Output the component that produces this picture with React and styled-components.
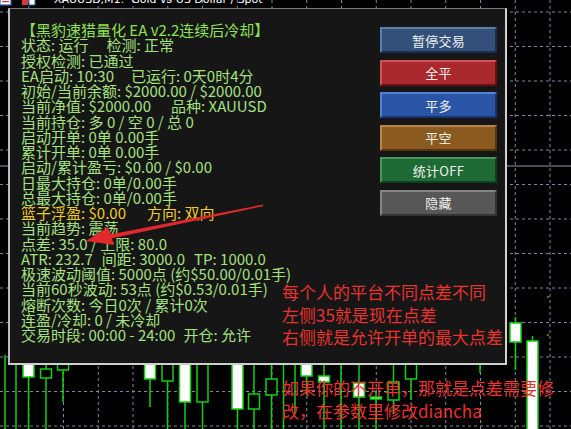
import React from "react";
import styled, { createGlobalStyle } from "styled-components";

const GlobalStyle = createGlobalStyle`
  html, body {
    margin: 0;
    padding: 0;
    background: #000;
    overflow: hidden;
  }
`;

const W = 571;
const H = 429;

const Screen = styled.div`
  position: relative;
  width: ${W}px;
  height: ${H}px;
  overflow: hidden;
  background: #000;
  font-family: "Noto Sans CJK SC", "Noto Sans", sans-serif;
`;

const ChartLayer = styled.svg`
  display: block;
`;

const TitleStrip = styled.div`
  position: absolute;
  top: 0;
  left: 0;
  height: 7px;
  display: flex;
  align-items: flex-start;
  gap: 8px;
  overflow: hidden;
`;

const TitleText = styled.span`
  margin-top: -6px;
  margin-left: 6px;
  font-family: "DejaVu Sans", "Liberation Sans", sans-serif;
  font-size: 11px;
  line-height: 12px;
  color: #fff;
  white-space: pre;
`;

const Panel = styled.div`
  position: absolute;
  left: 8px;
  top: 8px;
  width: 499px;
  height: 357px;
  box-sizing: border-box;
  background: #161616;
  border-style: solid;
  border-width: 1px 2px 2px 2px;
  border-color: #7a7a7a #d2d2d2 #cfcfcf #bdbdbd;
  display: flex;
  padding: 13px 8px 0 11px;
`;

const InfoColumn = styled.div`
  flex: 1;
  display: flex;
  flex-direction: column;
`;

const InfoLine = styled.div`
  font-size: 15px;
  line-height: 15.25px;
  height: 15.25px;
  white-space: pre;
  color: ${(p) =>
    p.$tone === "title" ? "#8fe255" : p.$tone === "gold" ? "#f0cc1e" : "#a4e27e"};
`;

const Gap = styled.span`
  display: inline-block;
  width: ${(p) => p.$w}px;
`;

const ButtonColumn = styled.div`
  width: 117px;
  margin-top: 5px;
  display: flex;
  flex-direction: column;
  gap: 6.6px;
`;

const palette = {
  pause: ["#33507b", "#5d7dab", "#1b2e4b"],
  closeAll: ["#a9282c", "#d35456", "#6a1012"],
  closeBuy: ["#2a55a7", "#5782d2", "#163271"],
  closeSell: ["#8a5a1e", "#b6864a", "#553510"],
  stats: ["#1f6b35", "#46985c", "#0d411f"],
  hide: ["#575757", "#858585", "#333333"],
};

const ActionButton = styled.div`
  height: 26px;
  box-sizing: border-box;
  border: 2px solid;
  border-color: ${(p) => palette[p.$variant][1]} ${(p) => palette[p.$variant][2]}
    ${(p) => palette[p.$variant][2]} ${(p) => palette[p.$variant][1]};
  background: ${(p) => palette[p.$variant][0]};
  color: #f2f2f2;
  font-size: 13px;
  display: flex;
  align-items: center;
  justify-content: center;
  letter-spacing: 0.3px;
`;

const NoteBlock = styled.div`
  position: absolute;
  left: 282px;
  top: ${(p) => p.$top}px;
  display: flex;
  flex-direction: column;
`;

const NoteLine = styled.div`
  font-size: 17px;
  line-height: ${(p) => p.$lh}px;
  color: #e8322e;
  white-space: pre;
`;

const ArrowLayer = styled.svg`
  position: absolute;
  left: 0;
  top: 0;
  pointer-events: none;
`;

const vLines = Array.from({ length: 16 }, (_, i) => 28.75 + i * 34.75);
const hLines = Array.from({ length: 13 }, (_, i) => 12 + i * 34.5);

const candles = [
  { x: 5, wick: [355, 429] },
  { x: 16, wick: [350, 429] },
  { x: 28.5, body: [350, 377], bull: true, wick: [350, 429] },
  { x: 46, body: [369, 378], wick: [350, 429] },
  { x: 63, body: [350, 370], wick: [350, 402] },
  { x: 150, body: [350, 379], bull: true, wick: [350, 407] },
  { x: 167.5, body: [350, 381], wick: [350, 429] },
  { x: 185, body: [350, 402], bull: true, wick: [350, 429] },
  { x: 202.5, body: [350, 402], wick: [350, 429] },
  { x: 237.5, body: [350, 409], bull: true, wick: [350, 429] },
  { x: 254, body: [394, 409], wick: [350, 429] },
  { x: 271.5, body: [379, 395], wick: [350, 429] },
  { x: 283.5, wick: [350, 429] },
  { x: 295, wick: [350, 413] },
  { x: 306.5, body: [350, 376], bull: true, wick: [350, 395] },
  { x: 324, body: [376, 382], bull: true, wick: [350, 429] },
  { x: 341, wick: [350, 429] },
  { x: 359, body: [383, 397], bull: true, wick: [350, 429] },
  { x: 376, body: [397, 399], bull: true, wick: [390, 429] },
  { x: 393.5, body: [382, 400], wick: [350, 414] },
  { x: 411, body: [350, 379], wick: [350, 400] },
  { x: 480, wick: [350, 373] },
  { x: 515.5, body: [323, 342], bull: true, wick: [317, 370] },
  { x: 532.5, body: [341, 440], bull: true, wick: [336, 429] },
];

function Chart() {
  return (
    <ChartLayer width={W} height={H} viewBox={`0 0 ${W} ${H}`}>
      {vLines.map((x) => (
        <line key={"v" + x} x1={x} y1={0} x2={x} y2={H} stroke="#7b8aa2" strokeWidth="1" strokeDasharray="3 3" />
      ))}
      {hLines.map((y) => (
        <line key={"h" + y} x1={0} y1={y} x2={W} y2={y} stroke="#7b8aa2" strokeWidth="1" strokeDasharray="3 3" />
      ))}
      <line x1={0} y1={166} x2={W} y2={166} stroke="#8d99aa" strokeWidth="1" />
      {candles.map((c) => (
        <g key={c.x}>
          <line x1={c.x} y1={c.wick[0]} x2={c.x} y2={c.wick[1]} stroke="#10d010" strokeWidth="1.5" />
          {c.body && (
            <rect
              x={c.x - 5.5}
              y={c.body[0]}
              width={11}
              height={c.body[1] - c.body[0]}
              fill={c.bull ? "#ffffff" : "#000000"}
              stroke="#10d010"
              strokeWidth="1.5"
            />
          )}
        </g>
      ))}
      <circle cx={548} cy={297} r={1.2} fill="#8a5a12" />
      <circle cx={548} cy={335} r={1.2} fill="#8a5a12" />
    </ChartLayer>
  );
}

function WindowIcons() {
  return (
    <svg width="40" height="7" viewBox="0 0 40 7">
      <rect x="0" y="-4" width="11" height="9" fill="#fff" stroke="#2b5fc4" strokeWidth="1.2" />
      <rect x="2" y="1" width="7" height="1.2" fill="#d23030" />
      <rect x="22" y="-4" width="6" height="9" fill="#d93a3a" />
      <rect x="29" y="-4" width="6" height="9" fill="#fff" stroke="#2b5fc4" strokeWidth="1" />
    </svg>
  );
}

function Arrow() {
  return (
    <ArrowLayer width={W} height={H} viewBox={`0 0 ${W} ${H}`}>
      <polygon points="263,204.6 263,206.2 111,238.6 110,234.4" fill="#e2282a" />
      <polygon points="86,241 108,227 114,245" fill="#e2282a" />
    </ArrowLayer>
  );
}

const lines = [
  { tone: "title", parts: ["【黑豹速猎量化 EA v2.2连续后冷却】"] },
  { parts: ["状态: 运行", 18, "检测: 正常"] },
  { parts: ["授权检测: 已通过"] },
  { parts: ["EA启动: 10:30", 17, "已运行: 0天0时4分"] },
  { parts: ["初始/当前余额: $2000.00 / $2000.00"] },
  { parts: ["当前净值: $2000.00", 20, "品种: XAUUSD"] },
  { parts: ["当前持仓: 多 0 / 空 0 / 总 0"] },
  { parts: ["启动开单: 0单 0.00手"] },
  { parts: ["累计开单: 0单 0.00手"] },
  { parts: ["启动/累计盈亏: $0.00 / $0.00"] },
  { parts: ["日最大持仓: 0单/0.00手"] },
  { parts: ["总最大持仓: 0单/0.00手"] },
  { tone: "gold", parts: ["篮子浮盈: $0.00", 21, "方向: 双向"] },
  { parts: ["当前趋势: 震荡"] },
  { parts: ["点差: 35.0 / 上限: 80.0"] },
  { parts: ["ATR: 232.7", 9, "间距: 3000.0", 9, "TP: 1000.0"] },
  { parts: ["极速波动阈值: 5000点 (约$50.00/0.01手)"] },
  { parts: ["当前60秒波动: 53点 (约$0.53/0.01手)"] },
  { parts: ["熔断次数: 今日0次 / 累计0次"] },
  { parts: ["连盈/冷却: 0 / 未冷却"] },
  { parts: ["交易时段: 00:00 - 24:00", 8, "开仓: 允许"] },
];

const buttons = [
  { label: "暂停交易", variant: "pause" },
  { label: "全平", variant: "closeAll" },
  { label: "平多", variant: "closeBuy" },
  { label: "平空", variant: "closeSell" },
  { label: "统计OFF", variant: "stats" },
  { label: "隐藏", variant: "hide" },
];

export default function App() {
  return (
    <>
      <GlobalStyle />
      <Screen>
        <Chart />
        <TitleStrip>
          <WindowIcons />
          <TitleText>XAUUSD,M1:  Gold vs US Dollar / Spot</TitleText>
        </TitleStrip>
        <Panel>
          <InfoColumn>
            {lines.map((l, i) => (
              <InfoLine key={i} $tone={l.tone}>
                {l.parts.map((p, j) =>
                  typeof p === "number" ? <Gap key={j} $w={p} /> : <span key={j}>{p}</span>
                )}
              </InfoLine>
            ))}
          </InfoColumn>
          <ButtonColumn>
            {buttons.map((b) => (
              <ActionButton key={b.label} $variant={b.variant}>
                {b.label}
              </ActionButton>
            ))}
          </ButtonColumn>
        </Panel>
        <Arrow />
        <NoteBlock $top={281}>
          <NoteLine $lh={22.5}>每个人的平台不同点差不同</NoteLine>
          <NoteLine $lh={22.5}>左侧35就是现在点差</NoteLine>
          <NoteLine $lh={22.5}>右侧就是允许开单的最大点差</NoteLine>
        </NoteBlock>
        <NoteBlock $top={376}>
          <NoteLine $lh={23}>如果你的不开单，那就是点差需要修</NoteLine>
          <NoteLine $lh={23}>改，在参数里修改diancha</NoteLine>
        </NoteBlock>
      </Screen>
    </>
  );
}
